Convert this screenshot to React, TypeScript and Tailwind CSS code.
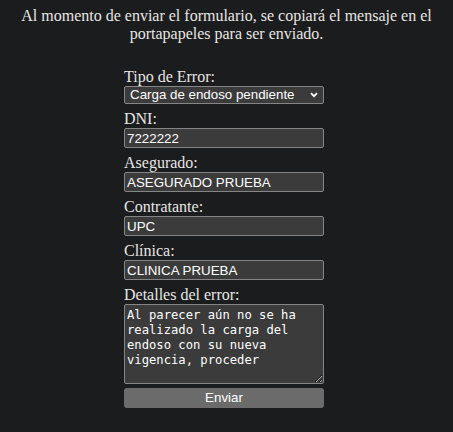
import React from "react";

export default function App() {
  const serif = { fontFamily: '"Liberation Serif", "Times New Roman", serif' };
  const fieldCls =
    "block w-[200px] h-[20px] bg-[#3b3b3b] border border-[#858585] rounded-[2px] px-[2px] text-[13.33px] leading-[18px] text-white outline-none";
  const sans = { fontFamily: '"Liberation Sans", Arial, sans-serif' };
  return (
    <div
      className="min-h-[432px] w-full bg-[#1b1c1e] text-[#e8e6e3]"
      style={serif}
    >
      <p className="pt-[7px] px-2 text-center text-[16px] leading-[18px]">
        Al momento de enviar el formulario, se copiará el mensaje en el
        portapapeles para ser enviado.
      </p>
      <div className="flex justify-center pr-[5px] mt-[24px]">
        <form className="flex flex-col w-[200px]" onSubmit={(e) => e.preventDefault()}>
          <label className="block text-[16px] leading-[19px]">Tipo de Error:</label>
          <div className="relative w-[200px] h-[18px] mb-[6px]">
            <select
              className="block w-[200px] h-[18px] appearance-none bg-[#3b3b3b] border border-[#858585] rounded-[2px] pl-[5px] text-[13.33px] leading-[16px] text-white outline-none"
              style={sans}
              defaultValue="a"
            >
              <option value="a">Carga de endoso pendiente</option>
            </select>
            <svg
              className="absolute right-[6px] top-[6px] pointer-events-none"
              width="8"
              height="6"
              viewBox="0 0 8 6"
            >
              <path d="M1 1.2 L4 4.2 L7 1.2" stroke="#ffffff" strokeWidth="1.8" fill="none" />
            </svg>
          </div>
          <label className="block text-[16px] leading-[18px]">DNI:</label>
          <input className={fieldCls + " mb-[6px]"} style={sans} defaultValue="7222222" />
          <label className="block text-[16px] leading-[18px]">Asegurado:</label>
          <input className={fieldCls + " mb-[6px]"} style={sans} defaultValue="ASEGURADO PRUEBA" />
          <label className="block text-[16px] leading-[18px]">Contratante:</label>
          <input className={fieldCls + " mb-[6px]"} style={sans} defaultValue="UPC" />
          <label className="block text-[16px] leading-[18px]">Clínica:</label>
          <input className={fieldCls + " mb-[6px]"} style={sans} defaultValue="CLINICA PRUEBA" />
          <label className="block text-[16px] leading-[18px]">Detalles del error:</label>
          <textarea
            className="block w-[200px] h-[80px] bg-[#3b3b3b] border border-[#858585] rounded-[2px] px-[2px] py-[3px] text-[12.2px] leading-[15px] text-white outline-none resize"
            style={{ fontFamily: '"DejaVu Sans Mono", "Liberation Mono", monospace', colorScheme: "dark" }}
            defaultValue="Al parecer aún no se ha realizado la carga del endoso con su nueva vigencia, proceder"
          />
          <button
            type="submit"
            className="mt-[4px] w-[200px] h-[20px] bg-[#6b6b6b] rounded-[3px] text-[13.33px] leading-[20px] text-white text-center"
            style={sans}
          >
            Enviar
          </button>
        </form>
      </div>
    </div>
  );
}
